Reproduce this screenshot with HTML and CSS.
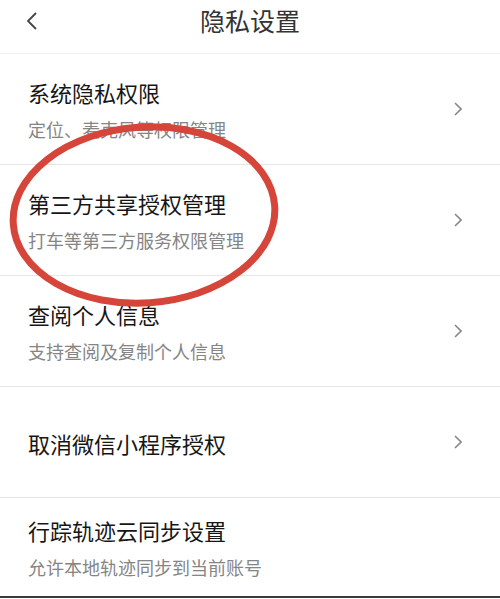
FILE: index.html
```html
<!DOCTYPE html>
<html lang="zh-CN">
<head>
    <meta charset="UTF-8">
    <meta name="viewport" content="width=device-width, initial-scale=1.0">
    <title>隐私设置</title>
    <link rel="stylesheet" href="styles.css">
</head>
<body>
    <div class="page">
        <div class="header">
            <span class="back">
                <svg width="12" height="18" viewBox="0 0 12 18"><path d="M10 1 L2 9 L10 17" fill="none" stroke="#444" stroke-width="1.8"/></svg>
            </span>
            <div class="title">隐私设置</div>
        </div>

        <div class="list">
            <div class="item">
                <div class="texts">
                    <div class="item-title">系统隐私权限</div>
                    <div class="item-sub">定位、麦克风等权限管理</div>
                </div>
                <span class="arrow"><svg width="8" height="14" viewBox="0 0 8 14"><path d="M1 1 L7 7 L1 13" fill="none" stroke="#888" stroke-width="1.6"/></svg></span>
            </div>
            <div class="item">
                <div class="texts">
                    <div class="item-title">第三方共享授权管理</div>
                    <div class="item-sub">打车等第三方服务权限管理</div>
                </div>
                <span class="arrow"><svg width="8" height="14" viewBox="0 0 8 14"><path d="M1 1 L7 7 L1 13" fill="none" stroke="#888" stroke-width="1.6"/></svg></span>
            </div>
            <div class="item">
                <div class="texts">
                    <div class="item-title">查阅个人信息</div>
                    <div class="item-sub">支持查阅及复制个人信息</div>
                </div>
                <span class="arrow"><svg width="8" height="14" viewBox="0 0 8 14"><path d="M1 1 L7 7 L1 13" fill="none" stroke="#888" stroke-width="1.6"/></svg></span>
            </div>
            <div class="item single">
                <div class="texts">
                    <div class="item-title">取消微信小程序授权</div>
                </div>
                <span class="arrow"><svg width="8" height="14" viewBox="0 0 8 14"><path d="M1 1 L7 7 L1 13" fill="none" stroke="#888" stroke-width="1.6"/></svg></span>
            </div>
            <div class="item last">
                <div class="texts">
                    <div class="item-title">行踪轨迹云同步设置</div>
                    <div class="item-sub">允许本地轨迹同步到当前账号</div>
                </div>
            </div>
        </div>

        <!-- hand-drawn red circle over the second row -->
        <svg class="mark" width="500" height="599" viewBox="0 0 500 599">
            <ellipse cx="144" cy="215" rx="131" ry="88" transform="rotate(-4 144 215)" fill="none" stroke="#d6453a" stroke-width="7"/>
        </svg>
    </div>
</body>
</html>
```

FILE: styles.css
```css
body {
    margin: 0;
    background-color: #fff;
    font-family: "Noto Sans CJK SC", "Noto Sans", sans-serif;
}

.page {
    position: relative;
    width: 500px;
    height: 599px;
    overflow: hidden;
}

.header {
    height: 53px;
    border-bottom: 1px solid #efefef;
    display: flex;
    align-items: flex-start;
    justify-content: center;
    position: relative;
}

.back {
    position: absolute;
    left: 26px;
    top: 11px;
}

.title {
    font-size: 25px;
    line-height: 40px;
    color: #333;
}

.item {
    display: flex;
    align-items: center;
    justify-content: space-between;
    height: 110px;
    padding: 0 38px 0 28px;
    border-bottom: 1px solid #e6e6e6;
    box-sizing: content-box;
}

.item-title {
    font-size: 22px;
    line-height: 30px;
    color: #161616;
}

.item-sub {
    font-size: 18px;
    line-height: 24px;
    margin-top: 10px;
    color: #858585;
}

.single .texts {
    padding-top: 2px;
}

.arrow {
    display: flex;
}

.last {
    height: 98px;
    border-bottom: 2px solid #3a3a3a;
}

.mark {
    position: absolute;
    left: 0;
    top: 0;
    pointer-events: none;
}
```
